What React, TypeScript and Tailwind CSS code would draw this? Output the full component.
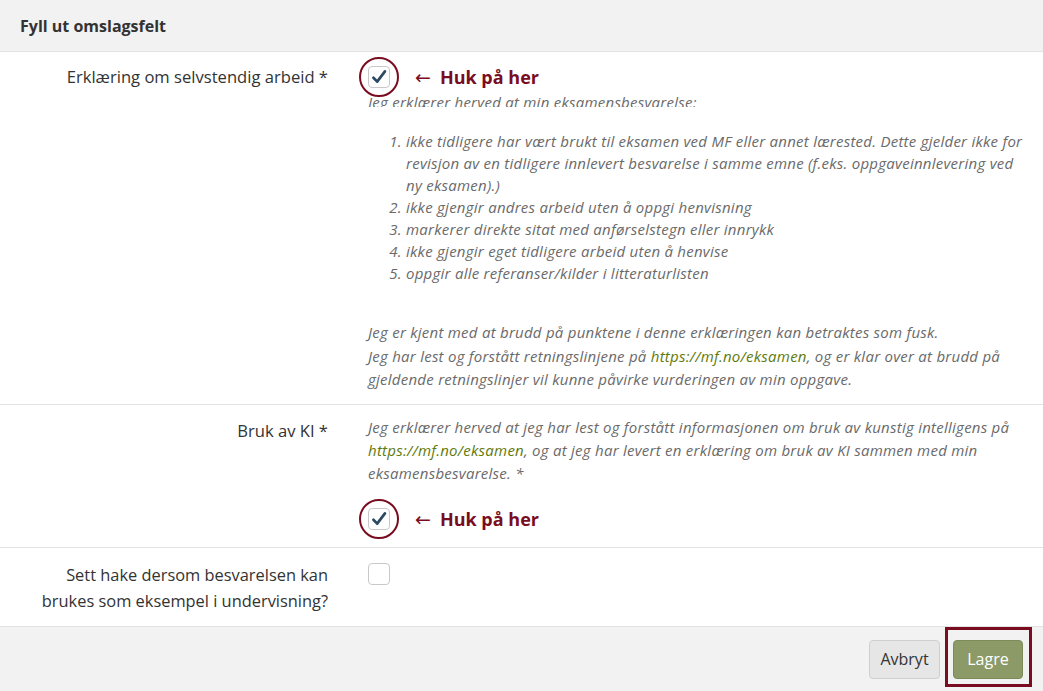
function CheckBox({ checked }: { checked?: boolean }) {
  return (
    <span className="flex h-[22px] w-[22px] items-center justify-center rounded-[4px] border border-[#c9c9c9] bg-white">
      {checked && (
        <svg viewBox="0 0 20 20" className="h-[18px] w-[18px]">
          <path d="M3.8 10.8 L8 15.2 L16.6 3.8" fill="none" stroke="#2c4963" strokeWidth="3" strokeLinecap="round" strokeLinejoin="round" />
        </svg>
      )}
    </span>
  );
}

function Marked() {
  return (
    <div className="flex h-[22px] items-center not-italic tracking-normal">
      <div className="relative">
        <CheckBox checked />
        <span className="absolute -inset-[9px] rounded-full border-[2.5px] border-[#7a0c1f]" />
      </div>
      <span className="ml-[25px] font-['DejaVu_Sans',sans-serif] text-[19px] leading-[22px] text-[#7a0c1f]">←</span>
      <span className="ml-[9px] text-[18px] font-bold leading-[22px] text-[#7a0c1f]">Huk på her</span>
    </div>
  );
}

const Link = () => <span className="text-[#5f7a0a]">https://mf.no/eksamen</span>;

export default function App() {
  return (
    <div className="flex h-[691px] w-full flex-col bg-white font-['Open_Sans',sans-serif] text-[#333]">
      {/* Header */}
      <div className="flex h-[52px] items-center border-b border-[#e3e3e3] bg-[#f2f2f2] px-5">
        <h2 className="text-[16px] font-bold text-[#333]">Fyll ut omslagsfelt</h2>
      </div>

      {/* Erklæring */}
      <div className="flex border-b border-[#e3e3e3]">
        <label className="w-[343px] shrink-0 pr-[15px] pt-[14px] text-right text-[16.6px] leading-[22px]">
          Erklæring om selvstendig arbeid *
        </label>
        <div className="flex-1 pl-[25px] pr-[15px] pt-[14px] pb-[12px] text-[15px] italic tracking-[0.25px] text-[#6a6a6a]">
          <Marked />
          <div className="mt-[3px] h-[16px] overflow-hidden leading-[22px]">
            Jeg erklærer herved at min eksamensbesvarelse:
          </div>
          <ol className="mt-[23px] list-decimal pl-[38px] leading-[22px] whitespace-nowrap">
            <li>
              ikke tidligere har vært brukt til eksamen ved MF eller annet lærested. Dette gjelder ikke for
              <br />
              revisjon av en tidligere innlevert besvarelse i samme emne (f.eks. oppgaveinnlevering ved
              <br />
              ny eksamen).)
            </li>
            <li>ikke gjengir andres arbeid uten å oppgi henvisning</li>
            <li>markerer direkte sitat med anførselstegn eller innrykk</li>
            <li>ikke gjengir eget tidligere arbeid uten å henvise</li>
            <li>oppgir alle referanser/kilder i litteraturlisten</li>
          </ol>
          <p className="mt-[37px] leading-[23.5px] whitespace-nowrap">
            Jeg er kjent med at brudd på punktene i denne erklæringen kan betraktes som fusk.
            <br />
            Jeg har lest og forstått retningslinjene på <Link />, og er klar over at brudd på
            <br />
            gjeldende retningslinjer vil kunne påvirke vurderingen av min oppgave.
          </p>
        </div>
      </div>

      {/* Bruk av KI */}
      <div className="flex border-b border-[#e3e3e3]">
        <label className="w-[343px] shrink-0 pr-[15px] pt-[15px] text-right text-[16.6px] leading-[22px]">
          Bruk av KI *
        </label>
        <div className="flex-1 pl-[25px] pr-[15px] pt-[11px] pb-[17px] text-[15px] italic tracking-[0.25px] text-[#6a6a6a]">
          <p className="leading-[23px] whitespace-nowrap">
            Jeg erklærer herved at jeg har lest og forstått informasjonen om bruk av kunstig intelligens på
            <br />
            <Link />, og at jeg har levert en erklæring om bruk av KI sammen med min
            <br />
            eksamensbesvarelse. *
          </p>
          <div className="mt-[23px]">
            <Marked />
          </div>
        </div>
      </div>

      {/* Eksempel */}
      <div className="flex h-[79px] border-b border-[#e3e3e3]">
        <label className="w-[343px] shrink-0 pr-[15px] pt-[14px] text-right text-[16.4px] leading-[26px]">
          Sett hake dersom besvarelsen kan
          <br />
          brukes som eksempel i undervisning?
        </label>
        <div className="flex-1 pl-[25px] pt-[15px]">
          <CheckBox />
        </div>
      </div>

      {/* Footer */}
      <div className="flex flex-1 items-start justify-end gap-[13px] bg-[#f2f2f2] pr-[20px] pt-[13px]">
        <button className="h-[39px] w-[71px] rounded-[4px] border border-[#cfcfcf] bg-[#e6e6e6] text-[16px] text-[#333]">
          Avbryt
        </button>
        <div className="relative">
          <button className="h-[39px] w-[70px] rounded-[4px] border border-[#7d8b59] bg-[#8b9a67] text-[16px] text-white">
            Lagre
          </button>
          <span className="absolute -bottom-[8px] -left-[8px] -right-[9px] -top-[13px] border-[3px] border-[#7a0c1f]" />
        </div>
      </div>
    </div>
  );
}
